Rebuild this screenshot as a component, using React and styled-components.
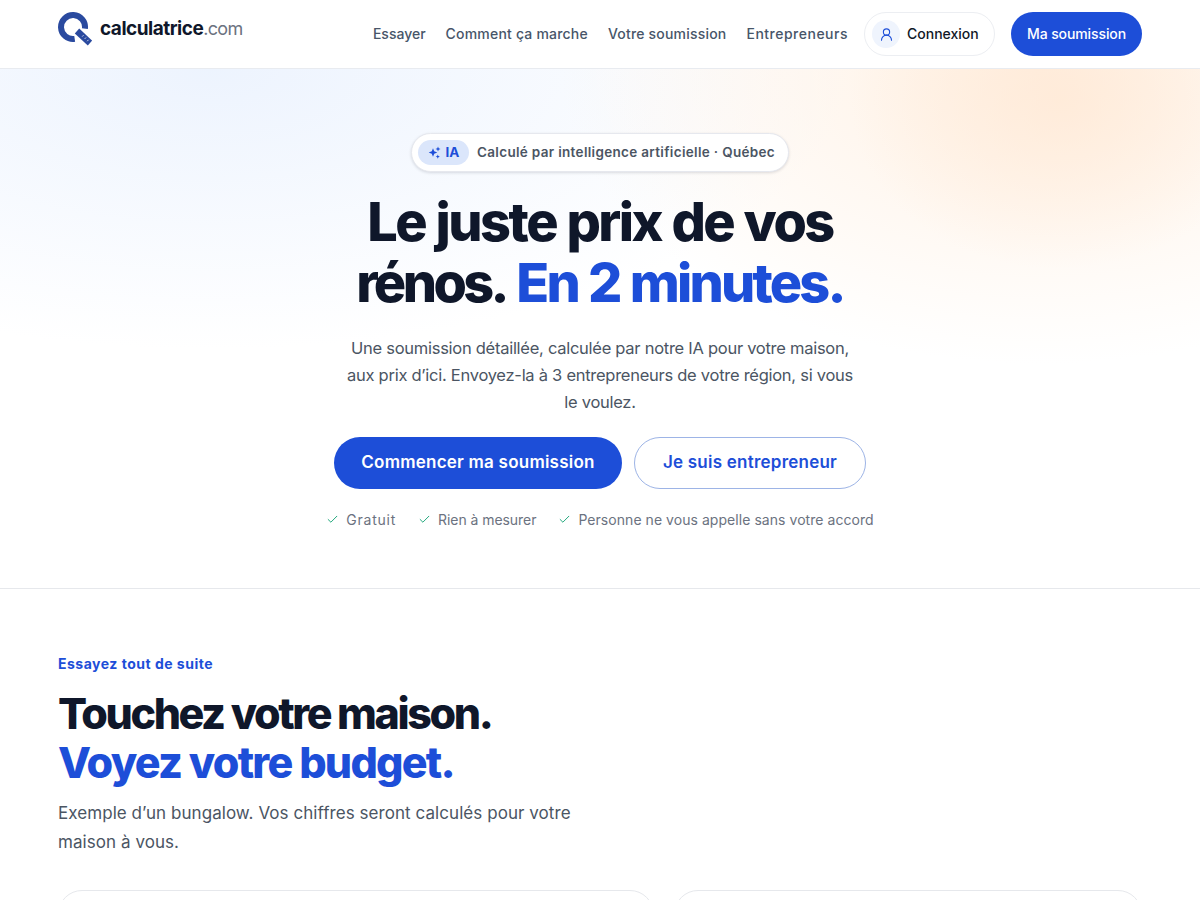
import React from 'react'
import styled, { createGlobalStyle } from 'styled-components'
import { Check, UserRound } from 'lucide-react'

const GlobalStyle = createGlobalStyle`
    html, body {
        margin:0;
        padding:0;
        background:#fff;
        font-family:Inter, "Liberation Sans", sans-serif;
        color:#0f172a;
    }
    * { box-sizing:border-box; }
`

const Page = styled.div`
    width:100%;
    height:900px;
    overflow:hidden;
    background:#fff;
`

const Header = styled.header`
    height:69px;
    padding:12px 58px 0;
    border-bottom:1px solid #e8ebf0;
    display:flex;
    justify-content:space-between;
    align-items:flex-start;
    background:#fff;
`

const Brand = styled.div`
    display:flex;
    align-items:center;
    gap:8px;
    height:34px;
`

const BrandName = styled.div`
    font-size:19px;
    font-weight:700;
    letter-spacing:-0.5px;
    color:#0f172a;
    margin-top:-1px;
    span {
        font-size:18px;
        font-weight:400;
        color:#6b7280;
        letter-spacing:-0.7px;
    }
`

const Nav = styled.nav`
    display:flex;
    align-items:center;
    height:44px;
`

const NavLink = styled.a`
    font-size:14px;
    font-weight:500;
    color:#475569;
    letter-spacing:${props => props.$track}px;
    margin-right:${props => props.$gap}px;
    padding-bottom:2px;
    white-space:nowrap;
`

const LoginButton = styled.div`
    width:131px;
    height:44px;
    border:1px solid #eceef2;
    border-radius:22px;
    background:#fff;
    display:flex;
    align-items:center;
    padding-left:7px;
    gap:7px;
    font-size:14px;
    font-weight:500;
    color:#111827;
    margin-right:16px;
`

const LoginLabel = styled.span`
    padding-bottom:2px;
`

const LoginIcon = styled.div`
    width:28px;
    height:28px;
    border-radius:50%;
    background:#eff4fd;
    color:#1d4ed8;
    display:flex;
    align-items:center;
    justify-content:center;
`

const NavButton = styled.div`
    width:131px;
    height:44px;
    padding-bottom:2px;
    border-radius:22px;
    background:#1d4ed8;
    color:#fff;
    display:flex;
    align-items:center;
    justify-content:center;
    font-size:14px;
    font-weight:500;
    letter-spacing:-0.1px;
`

const Hero = styled.section`
    height:520px;
    padding-top:64px;
    border-bottom:1px solid #e6e8ec;
    display:flex;
    flex-direction:column;
    align-items:center;
    background:
        radial-gradient(ellipse 210px 170px at 1060px 30px, rgba(255,232,212,0.7), rgba(255,232,212,0) 100%),
        radial-gradient(ellipse 480px 295px at 1040px 0px, rgba(255,240,226,0.95), rgba(255,240,226,0) 100%),
        radial-gradient(ellipse 640px 280px at 210px 0px, rgba(236,243,254,0.95), rgba(236,243,254,0) 100%),
        #fff;
`

const Badge = styled.div`
    height:39px;
    width:378px;
    border:1px solid #e6e8ee;
    border-radius:20px;
    background:#fff;
    box-shadow:0 1px 3px rgba(15,23,42,0.14);
    display:flex;
    align-items:center;
    padding-left:6px;
    gap:8px;
    font-size:13.5px;
    font-weight:600;
    letter-spacing:0.32px;
    color:#4b5563;
    white-space:nowrap;
`

const BadgeLabel = styled.span`
    padding-bottom:2px;
`

const BadgeTag = styled.div`
    width:51px;
    height:25px;
    padding-bottom:1px;
    border-radius:13px;
    background:#dbe6fb;
    color:#1d4ed8;
    display:flex;
    align-items:center;
    justify-content:center;
    gap:5px;
    font-size:13.5px;
    font-weight:700;
    letter-spacing:0;
`

const Title = styled.h1`
    margin:19px 0 0;
    font-size:54px;
    line-height:61px;
    font-weight:800;
    letter-spacing:-2.5px;
    word-spacing:1px;
    text-align:center;
    color:#0f172a;
    white-space:nowrap;
`

const TightWord = styled.span`
    letter-spacing:-3.6px;
`

const Accent = styled.span`
    color:#1d4ed8;
    letter-spacing:${props => props.$track}px;
`

const Lead = styled.p`
    margin:22px 0 0;
    font-size:16.5px;
    line-height:27px;
    letter-spacing:-0.27px;
    text-align:center;
    color:#4b5563;
    white-space:nowrap;
`

const Actions = styled.div`
    margin-top:21px;
    display:flex;
    gap:12px;
`

const PrimaryButton = styled.div`
    width:288px;
    height:52px;
    padding-bottom:2px;
    border-radius:26px;
    background:#1d4ed8;
    color:#fff;
    display:flex;
    align-items:center;
    justify-content:center;
    font-size:17px;
    font-weight:600;
    letter-spacing:0.23px;
`

const SecondaryButton = styled(PrimaryButton)`
    width:232px;
    background:#fff;
    border:1px solid #9db4e6;
    color:#1d4ed8;
`

const Perks = styled.div`
    margin-top:22px;
    display:flex;
    gap:22px;
    font-size:14px;
    color:#6b7280;
    white-space:nowrap;
`

const Perk = styled.div`
    display:flex;
    align-items:center;
    gap:7px;
    letter-spacing:${props => props.$track}px;
    svg { color:#16a374; }
`

const Demo = styled.section`
    padding:65px 58px 0;
`

const Eyebrow = styled.div`
    font-size:14px;
    line-height:20px;
    font-weight:700;
    letter-spacing:0.5px;
    color:#1d4ed8;
`

const DemoTitle = styled.h2`
    margin:15px 0 0;
    font-size:43px;
    line-height:49px;
    font-weight:800;
    letter-spacing:-2.4px;
    color:#0f172a;
    white-space:nowrap;
`

const DemoLead = styled.p`
    margin:12px 0 0;
    font-size:17px;
    line-height:29px;
    letter-spacing:0.06px;
    color:#4b5563;
    white-space:nowrap;
`

const Cards = styled.div`
    margin-top:33px;
    display:grid;
    grid-template-columns:596px 1fr;
    gap:20px;
`

const Card = styled.div`
    height:200px;
    border:1px solid #e6e8ec;
    border-radius:24px;
    background:#fff;
`

function LogoMark() {
    return (
        <svg width="34" height="34" viewBox="0 0 34 34" fill="none">
            <path d="M16.7 26.9A12 12 0 1 1 26.9 16.7" stroke="#2a4a9f" strokeWidth="6" />
            <path d="M19 19L32 31" stroke="#2a4a9f" strokeWidth="6.5" />
            <path d="M25.5 23.2L24.2 24.6M28 25.5L26.7 26.9M30.5 27.8L29.2 29.2" stroke="#fff" strokeWidth="0.8" />
        </svg>
    )
}

function SparkIcon() {
    return (
        <svg width="13" height="13" viewBox="0 0 13 13" fill="#1d4ed8">
            <path d="M5 2.2L6.2 5.3L9.3 6.5L6.2 7.7L5 10.8L3.8 7.7L0.7 6.5L3.8 5.3Z" />
            <path d="M10 0.5L10.7 2.3L12.5 3L10.7 3.7L10 5.5L9.3 3.7L7.5 3L9.3 2.3Z" />
            <path d="M9.8 8.5L10.4 10L11.9 10.6L10.4 11.2L9.8 12.7L9.2 11.2L7.7 10.6L9.2 10Z" />
        </svg>
    )
}

function PerkItem({ track, children }) {
    return (
        <Perk $track={track}>
            <Check size={13} strokeWidth={1.75} />
            {children}
        </Perk>
    )
}

export default function App() {
    return (
        <Page>
            <GlobalStyle />
            <Header>
                <Brand>
                    <LogoMark />
                    <BrandName>calculatrice<span>.com</span></BrandName>
                </Brand>
                <Nav>
                    <NavLink $track={0} $gap={20}>Essayer</NavLink>
                    <NavLink $track={0.2} $gap={20}>Comment ça marche</NavLink>
                    <NavLink $track={0.2} $gap={20}>Votre soumission</NavLink>
                    <NavLink $track={0.5} $gap={16}>Entrepreneurs</NavLink>
                    <LoginButton>
                        <LoginIcon><UserRound size={15} strokeWidth={1.75} /></LoginIcon>
                        <LoginLabel>Connexion</LoginLabel>
                    </LoginButton>
                    <NavButton>Ma soumission</NavButton>
                </Nav>
            </Header>
            <Hero>
                <Badge>
                    <BadgeTag><SparkIcon />IA</BadgeTag>
                    <BadgeLabel>Calculé par intelligence artificielle · Québec</BadgeLabel>
                </Badge>
                <Title>
                    Le juste prix de vos<br />
                    <TightWord>rénos.</TightWord> <Accent $track={-2.8}>En 2 minutes.</Accent>
                </Title>
                <Lead>
                    Une soumission détaillée, calculée par notre IA pour votre maison,<br />
                    aux prix d’ici. Envoyez-la à 3 entrepreneurs de votre région, si vous<br />
                    le voulez.
                </Lead>
                <Actions>
                    <PrimaryButton>Commencer ma soumission</PrimaryButton>
                    <SecondaryButton>Je suis entrepreneur</SecondaryButton>
                </Actions>
                <Perks>
                    <PerkItem track={0.75}>Gratuit</PerkItem>
                    <PerkItem track={-0.05}>Rien à mesurer</PerkItem>
                    <PerkItem track={0.05}>Personne ne vous appelle sans votre accord</PerkItem>
                </Perks>
            </Hero>
            <Demo>
                <Eyebrow>Essayez tout de suite</Eyebrow>
                <DemoTitle>
                    Touchez votre maison.<br />
                    <Accent $track={-1.75}>Voyez votre budget.</Accent>
                </DemoTitle>
                <DemoLead>
                    Exemple d’un bungalow. Vos chiffres seront calculés pour votre<br />
                    maison à vous.
                </DemoLead>
                <Cards>
                    <Card />
                    <Card />
                </Cards>
            </Demo>
        </Page>
    )
}
